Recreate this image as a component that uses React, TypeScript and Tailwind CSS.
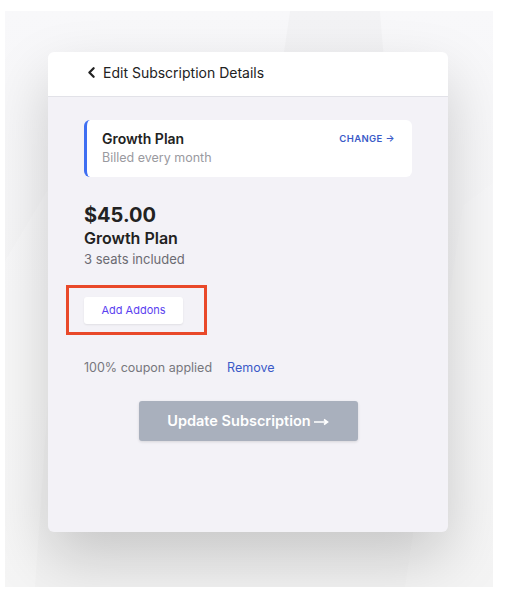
import { ChevronLeft } from 'lucide-react';

const App = () => {
  return (
    <div className="w-[531px] h-[591px] bg-white pt-[11px] pl-[5px] font-['Inter',sans-serif]">
      <div className="relative w-[488px] h-[576px] overflow-hidden bg-gradient-to-b from-[#f8f8fa] to-[#f2f2f2] pt-[41px] pl-[43px]">
        {/* faint background facets */}
        <svg className="absolute inset-0" width="488" height="576" viewBox="0 0 488 576">
          <polygon points="285,0 375,0 400,300 240,300" fill="#000" opacity="0.018" />
          <polygon points="0,250 60,150 30,576 0,576" fill="#fff" opacity="0.25" />
          <polygon points="458,195 488,172 488,576 400,576" fill="#fff" opacity="0.2" />
        </svg>

        <div className="relative w-[400px] h-[480px] rounded-md bg-[#f3f2f7] shadow-[0_26px_60px_rgba(0,0,0,0.18)] overflow-hidden">
          <div className="h-[45px] bg-white border-b border-[#e2e2e8] flex items-center pl-[35px] pb-[3px] gap-[3px] text-[14px] text-[#222]">
            <ChevronLeft size={17} strokeWidth={3.2} />
            <span>Edit Subscription Details</span>
          </div>

          <div className="px-[36px] pt-[23px]">
            <div className="h-[57px] bg-white rounded-md border-l-[3px] border-[#3f6ff2] pl-[15px] pr-[17px] pt-[9px] flex justify-between">
              <div>
                <div className="text-[14px] leading-[20px] font-semibold text-[#222]">Growth Plan</div>
                <div className="text-[12.5px] leading-[18px] text-[#9a9a9f]">Billed every month</div>
              </div>
              <div className="text-[9.5px] leading-[20px] font-semibold tracking-[0.4px] text-[#3a5ac8]">CHANGE →</div>
            </div>

            <div className="mt-[26px] text-[20px] leading-[24px] font-bold text-[#222]">$45.00</div>
            <div className="text-[16px] leading-[22px] font-semibold text-[#222]">Growth Plan</div>
            <div className="text-[13px] leading-[18px] text-[#6b6b72] mt-[1px]">3 seats included</div>

            <div className="mt-[17px] -ml-[18px] w-[141px] h-[50px] border-[3px] border-[#e9492a] pl-[15px] pt-[8px]">
              <button className="w-[99px] h-[27px] bg-white rounded-[3px] shadow-[0_1px_2px_rgba(0,0,0,0.08)] text-[11px] text-[#5b3ff0]">
                Add Addons
              </button>
            </div>

            <div className="mt-[24px] flex items-center gap-[15px] text-[12.5px] leading-[18px]">
              <span className="text-[#77777d]">100% coupon applied</span>
              <span className="text-[#3a5ac8]">Remove</span>
            </div>

            <div className="mt-[24px] flex justify-center">
              <button className="w-[219px] h-[40px] rounded-[3px] bg-[#a9b0bd] shadow-[0_1px_3px_rgba(0,0,0,0.12)] text-white text-[14.5px] font-semibold flex items-center justify-center gap-[3px]">
                <span>Update Subscription</span>
                <svg width="15" height="8" viewBox="0 0 15 8" className="mt-[2px]">
                  <path d="M0 4h13M10 1.5 13.5 4 10 6.5" fill="none" stroke="#fff" strokeWidth="1.6" />
                </svg>
              </button>
            </div>
          </div>
        </div>
      </div>
    </div>
  );
};

export default App;
